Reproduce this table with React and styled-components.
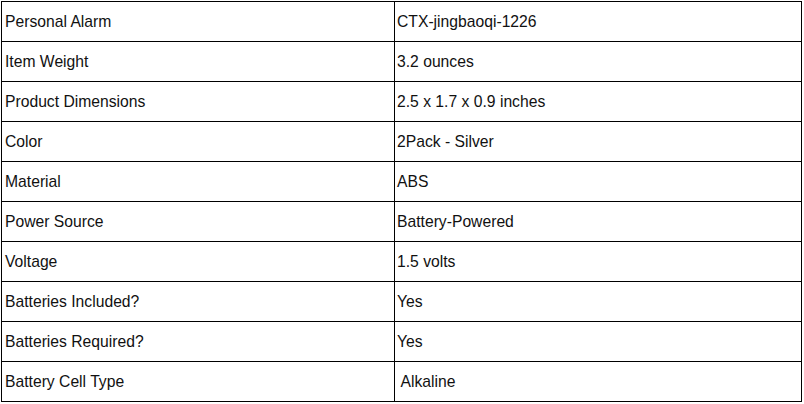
import React from "react";
import styled, { createGlobalStyle } from "styled-components";

const Global = createGlobalStyle`
  html, body { margin: 0; padding: 0; background: #fff; }
  body { font-family: "Liberation Sans", Arial, sans-serif; }
`;

const Page = styled.div`
  padding: 1px 0 0 1px;
`;

const Grid = styled.div`
  display: grid;
  grid-template-columns: 392px 406px;
  grid-auto-rows: 39px;
  gap: 1px;
  padding: 1px;
  width: max-content;
  background: #000;
`;

const Cell = styled.div`
  background: #fff;
  display: flex;
  align-items: center;
  padding: 1px 0 0 ${(p) => (p.$value ? "2px" : "3px")};
  font-size: 15.7px;
  color: #111;
  white-space: pre;
`;

const rows = [
  ["Personal Alarm", "CTX-jingbaoqi-1226"],
  ["Item Weight", "3.2 ounces"],
  ["Product Dimensions", "2.5 x 1.7 x 0.9 inches"],
  ["Color", "2Pack - Silver"],
  ["Material", "ABS"],
  ["Power Source", "Battery-Powered"],
  ["Voltage", "1.5 volts"],
  ["Batteries Included?", "Yes"],
  ["Batteries Required?", "Yes"],
  ["Battery Cell Type", " Alkaline"],
];

export default function App() {
  return (
    <>
      <Global />
      <Page>
        <Grid>
          {rows.map(([k, v]) => (
            <React.Fragment key={k}>
              <Cell>{k}</Cell>
              <Cell $value>{v}</Cell>
            </React.Fragment>
          ))}
        </Grid>
      </Page>
    </>
  );
}
